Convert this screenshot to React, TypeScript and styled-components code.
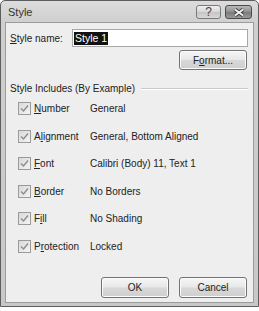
import styled, { createGlobalStyle } from 'styled-components'

const GlobalStyle = createGlobalStyle`
  html, body {
    margin: 0;
    padding: 0;
    background: #ffffff;
  }
  body {
    font-family: "Liberation Sans", Arial, sans-serif;
    font-size: 10px;
    color: #222;
  }
`

const Window = styled.div`
  width: 259px;
  height: 307px;
  box-sizing: border-box;
  border: 1px solid #5e5e5e;
  border-radius: 5px 5px 0 0;
  background: linear-gradient(#dcdcdc, #cfcfcf 22px, #c8c8c8);
  padding: 0 4px 3px;
  display: flex;
  flex-direction: column;
  font-family: "Liberation Sans", Arial, sans-serif;
  font-size: 10px;
`

const TitleBar = styled.div`
  height: 21px;
  display: flex;
  align-items: center;
  padding-left: 3px;
  gap: 4px;
`

const Title = styled.span`
  flex: 1;
  color: #333;
  font-size: 11px;
`

const CaptionButton = styled.div<{ $dark?: boolean; $w: number }>`
  width: ${(p) => p.$w}px;
  height: 14px;
  box-sizing: border-box;
  border: 1px solid ${(p) => (p.$dark ? '#4c4c4c' : '#7a7a7a')};
  border-radius: 3px;
  background: ${(p) =>
    p.$dark
      ? 'linear-gradient(#b9b9b9, #8e8e8e 50%, #7a7a7a 51%, #9a9a9a)'
      : 'linear-gradient(#f0f0f0, #d6d6d6 50%, #c4c4c4 51%, #d8d8d8)'};
  display: flex;
  align-items: center;
  justify-content: center;
  margin-top: 1px;
  &:last-child {
    margin-right: 2px;
  }
`

const HelpMark = styled.span`
  font-size: 12px;
  line-height: 1;
  color: #444;
`

const Client = styled.div`
  flex: 1;
  border: 1px solid #9c9c9c;
  background: #eeeeee;
  padding: 6px 5px 4px 4px;
  display: flex;
  flex-direction: column;
`

const NameRow = styled.div`
  display: flex;
  align-items: center;
`

const Label = styled.span`
  width: 62px;
`

const NameInput = styled.div`
  flex: 1;
  height: 18px;
  box-sizing: border-box;
  border: 1px solid #a8a8a8;
  background: #fff;
  display: flex;
  align-items: center;
  padding-left: 1px;
  font-size: 10.5px;
`

const Selected = styled.span`
  background: #111;
  color: #fff;
  padding: 0 1px;
  line-height: 13px;
`

const Button = styled.div<{ $h?: number }>`
  width: 68px;
  height: ${(p) => p.$h ?? 21}px;
  box-sizing: border-box;
  border: 1px solid #737373;
  border-radius: 3px;
  background: linear-gradient(#f6f6f6, #e8e8e8 48%, #d8d8d8 52%, #cfcfcf);
  box-shadow: inset 0 0 0 1px #fbfbfb;
  display: flex;
  align-items: center;
  justify-content: center;
  color: #222;
`

const FormatRow = styled.div`
  display: flex;
  justify-content: flex-end;
  margin-top: 3px;
  padding-right: 1px;
`

const GroupHeader = styled.div`
  display: flex;
  align-items: center;
  gap: 6px;
  height: 13px;
  margin-top: 12px;
  &::after {
    content: '';
    flex: 1;
    height: 1px;
    background: #c9c9c9;
    border-bottom: 1px solid #fff;
  }
`

const List = styled.div`
  display: flex;
  flex-direction: column;
  padding-left: 8px;
  margin-top: 7px;
  gap: 14.5px;
`

const Row = styled.div`
  display: flex;
  align-items: center;
  height: 13px;
`

const Box = styled.div`
  width: 13px;
  height: 13px;
  box-sizing: border-box;
  border: 1px solid #9a9a9a;
  background: linear-gradient(135deg, #d9d9d9, #f4f4f4);
  display: flex;
  align-items: center;
  justify-content: center;
  margin-right: 3px;
`

const ItemName = styled.span`
  width: 56px;
`

const Footer = styled.div`
  margin-top: auto;
  display: flex;
  justify-content: flex-end;
  gap: 10px;
  padding-right: 1px;
`

const Key = styled.u`
  text-decoration-thickness: 1px;
  text-underline-offset: 1px;
`

const Check = () => (
  <svg width="9" height="9" viewBox="0 0 9 9">
    <path d="M1 4.5 L3.5 7 L8 1.5" fill="none" stroke="#8f8f8f" strokeWidth="1.5" />
  </svg>
)

const items: [string, number, string][] = [
  ['Number', 0, 'General'],
  ['Alignment', 1, 'General, Bottom Aligned'],
  ['Font', 0, 'Calibri (Body) 11, Text 1'],
  ['Border', 0, 'No Borders'],
  ['Fill', 1, 'No Shading'],
  ['Protection', 1, 'Locked'],
]

const withKey = (text: string, i: number) => (
  <>
    {text.slice(0, i)}
    <Key>{text[i]}</Key>
    {text.slice(i + 1)}
  </>
)

const App = () => (
  <>
    <GlobalStyle />
    <Window>
      <TitleBar>
        <Title>Style</Title>
        <CaptionButton $w={25}>
          <HelpMark>?</HelpMark>
        </CaptionButton>
        <CaptionButton $dark $w={27}>
          <svg width="14" height="9" viewBox="0 0 14 9">
            <path d="M3 1.5 L11 7.5 M11 1.5 L3 7.5" stroke="#3a3a3a" strokeWidth="3.6" />
            <path d="M3 1.5 L11 7.5 M11 1.5 L3 7.5" stroke="#f4f4f4" strokeWidth="1.9" />
          </svg>
        </CaptionButton>
      </TitleBar>
      <Client>
        <NameRow>
          <Label>{withKey('Style name:', 0)}</Label>
          <NameInput>
            <Selected>Style 1</Selected>
          </NameInput>
        </NameRow>
        <FormatRow>
          <Button $h={20}>{withKey('Format...', 1)}</Button>
        </FormatRow>
        <GroupHeader>Style Includes (By Example)</GroupHeader>
        <List>
          {items.map(([name, k, value]) => (
            <Row key={name}>
              <Box>
                <Check />
              </Box>
              <ItemName>{withKey(name, k)}</ItemName>
              <span>{value}</span>
            </Row>
          ))}
        </List>
        <Footer>
          <Button>OK</Button>
          <Button>Cancel</Button>
        </Footer>
      </Client>
    </Window>
  </>
)

export default App
